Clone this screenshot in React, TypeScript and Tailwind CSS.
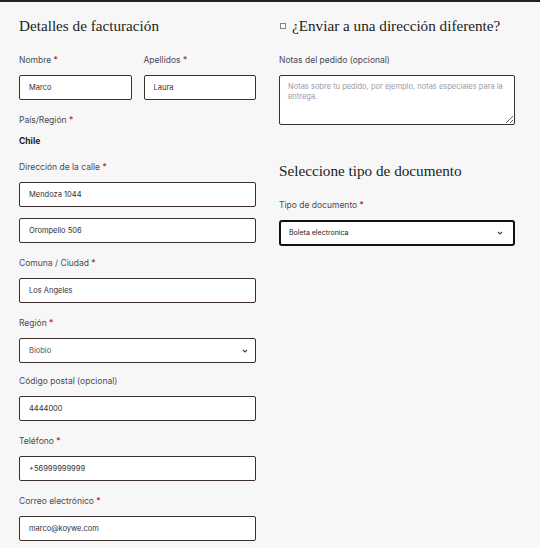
const label = "block text-[8.5px] leading-[12px] text-[#4a4a52]";
const input =
  "block w-full h-[25px] rounded-[2px] border border-[#3d2f2f] bg-white px-[9px] text-[7.5px] text-[#2f2f35] outline-none";
const heading =
  "whitespace-nowrap font-['Liberation_Serif',serif] text-[15.2px] leading-[24px] text-[#1c1c22]";

function Req() {
  return <span className="text-[#b3261e]"> *</span>;
}

function Field({
  name,
  value,
  required = true,
}: {
  name: string;
  value: string;
  required?: boolean;
}) {
  return (
    <div>
      <label className={label}>
        {name}
        {required && <Req />}
      </label>
      <input className={`${input} mt-[9px]`} defaultValue={value} readOnly />
    </div>
  );
}

function Chevron() {
  return (
    <svg width="6" height="4" viewBox="0 0 6 4" className="text-[#444]">
      <path d="M1 1l2 2 2-2" fill="none" stroke="currentColor" strokeWidth="1.1" />
    </svg>
  );
}

export default function App() {
  return (
    <div className="min-h-[548px] w-[540px] bg-[#f7f7f7] font-['Inter','Noto_Sans',sans-serif]">
      <div className="h-[2px] bg-[#202326]" />
      <div className="grid grid-cols-[237px_236px] gap-x-[23px] pl-[19px] pt-[12px]">
        {/* Facturación */}
        <div className="flex flex-col">
          <h3 className={heading}>Detalles de facturación</h3>
          <div className="mt-[16px] grid grid-cols-2 gap-x-[12px]">
            <Field name="Nombre" value="Marco" />
            <Field name="Apellidos" value="Laura" />
          </div>
          <div className="mt-[14px]">
            <span className={label}>
              País/Región
              <Req />
            </span>
            <p className="mt-[9px] text-[8.5px] leading-[12px] font-bold text-[#1c1c22]">Chile</p>
          </div>
          <div className="mt-[14px]">
            <Field name="Dirección de la calle" value="Mendoza 1044" />
            <input className={`${input} mt-[11px]`} defaultValue="Orompello 506" readOnly />
          </div>
          <div className="mt-[14px]">
            <Field name="Comuna / Ciudad" value="Los Ángeles" />
          </div>
          <div className="mt-[14px]">
            <span className={label}>
              Región
              <Req />
            </span>
            <div className="mt-[9px] flex h-[25px] items-center justify-between rounded-[2px] border border-[#3d2f2f] bg-white pl-[9px] pr-[7px] text-[7.5px] text-[#555]">
              <span>Biobío</span>
              <Chevron />
            </div>
          </div>
          <div className="mt-[12px]">
            <Field name="Código postal (opcional)" value="4444000" required={false} />
          </div>
          <div className="mt-[14px]">
            <Field name="Teléfono" value="+56999999999" />
          </div>
          <div className="mt-[14px]">
            <Field name="Correo electrónico" value="marco@koywe.com" />
          </div>
        </div>

        {/* Envío y documento */}
        <div className="flex flex-col">
          <h3 className={`${heading} flex items-center`}>
            <span className="ml-[1px] mr-[6px] inline-block h-[6px] w-[6px] border border-[#888] bg-white" />
            ¿Enviar a una dirección diferente?
          </h3>
          <label className={`${label} mt-[16px]`}>Notas del pedido (opcional)</label>
          <textarea
            className="mt-[9px] block h-[50px] w-full rounded-[2px] border border-[#3d2f2f] bg-white px-[8px] py-[6px] text-[7.5px] leading-[10px] text-[#333] placeholder:text-[#9a9aa2] outline-none"
            placeholder="Notas sobre tu pedido, por ejemplo, notas especiales para la entrega."
          />
          <h3 className={`${heading} mt-[34px]`}>Seleccione tipo de documento</h3>
          <span className={`${label} mt-[16px]`}>
            Tipo de documento
            <Req />
          </span>
          <div className="mt-[9px] flex h-[26px] items-center justify-between rounded-[3px] border-2 border-[#111] bg-white pl-[8px] pr-[10px] text-[7px] text-[#222]">
            <span>Boleta electronica</span>
            <Chevron />
          </div>
        </div>
      </div>
    </div>
  );
}
